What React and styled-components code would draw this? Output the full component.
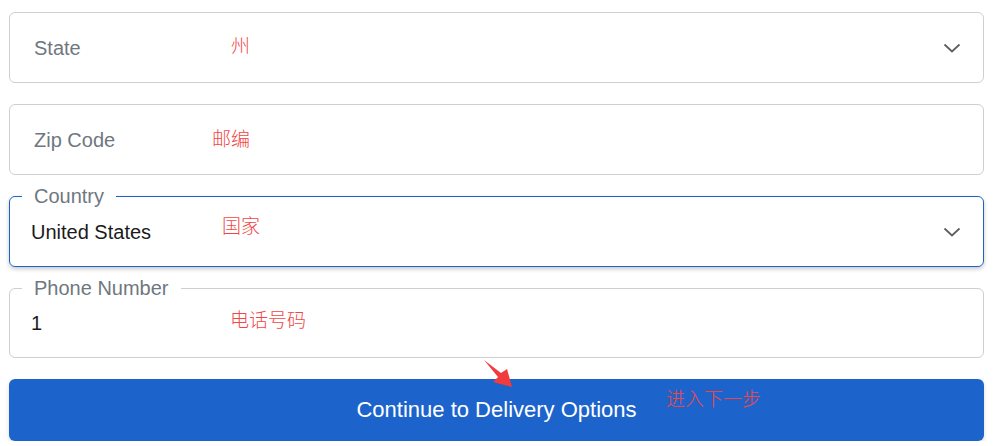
import styled, { createGlobalStyle } from "styled-components";

const Global = createGlobalStyle`
  body {
    margin: 0;
    background: #fff;
    font-family: "Liberation Sans", Arial, sans-serif;
  }
`;

const Form = styled.div`
  display: flex;
  flex-direction: column;
  gap: 21px;
  padding: 12px 12px 0 9px;
  position: relative;
`;

const Field = styled.div`
  position: relative;
  height: ${(p) => p.$h || 71}px;
  box-sizing: border-box;
  border: 1px solid ${(p) => (p.$focused ? "#1d62c8" : "#cfcfcf")};
  border-radius: 6px;
  box-shadow: ${(p) => (p.$focused ? "0 2px 4px rgba(0,0,0,0.22)" : "none")};
  display: flex;
  align-items: center;
  padding: 0 22px 0 ${(p) => (p.$filled ? 21 : 24)}px;
`;

const Placeholder = styled.span`
  font-size: 20px;
  color: #6f7780;
  flex: 1;
  padding-top: 2px;
`;

const Value = styled.span`
  font-size: 20px;
  color: #1b1b1b;
  flex: 1;
  padding-top: 1px;
`;

const Legend = styled.span`
  position: absolute;
  top: -12px;
  left: 12px;
  padding: 0 12px;
  background: #fff;
  font-size: 20px;
  line-height: 22px;
  color: #6f7780;
`;

const Note = styled.span`
  position: absolute;
  left: ${(p) => p.$x}px;
  top: ${(p) => p.$y}px;
  font-family: "Noto Sans CJK SC", sans-serif;
  font-size: 19px;
  line-height: 1;
  color: #f24646;
  font-weight: 300;
  white-space: nowrap;
`;

const Chevron = styled.svg`
  width: 18px;
  height: 10px;
  flex: none;
`;

const Button = styled.button`
  height: 62px;
  border: none;
  border-radius: 6px;
  background: #1c64cc;
  color: #fff;
  font-family: "Liberation Sans", Arial, sans-serif;
  font-size: 22px;
  box-shadow: 0 2px 4px rgba(0, 0, 0, 0.15);
  position: relative;
  padding: 0;
`;

const Arrow = styled.svg`
  position: absolute;
  left: 480px;
  top: 356px;
  width: 36px;
  height: 34px;
`;

function Down() {
  return (
    <Chevron viewBox="0 0 18 10">
      <polyline points="1.5,1.5 9,8.5 16.5,1.5" fill="none" stroke="#5f5f5f" strokeWidth="1.8" />
    </Chevron>
  );
}

export default function App() {
  return (
    <>
      <Global />
      <Form>
        <Field>
          <Placeholder>State</Placeholder>
          <Down />
          <Note $x={221} $y={22}>州</Note>
        </Field>
        <Field>
          <Placeholder>Zip Code</Placeholder>
          <Note $x={202} $y={23}>邮编</Note>
        </Field>
        <Field $focused $filled>
          <Legend>Country</Legend>
          <Value>United States</Value>
          <Down />
          <Note $x={212} $y={18}>国家</Note>
        </Field>
        <Field $filled $h={70}>
          <Legend>Phone Number</Legend>
          <Value>1</Value>
          <Note $x={220} $y={20}>电话号码</Note>
        </Field>
        <Button>
          Continue to Delivery Options
          <Note $x={657} $y={9}>进入下一步</Note>
        </Button>
        <Arrow viewBox="0 0 36 34">
          <polygon points="4,4 21,17 27,13 32,31 13,26 18,21" fill="#f03c3c" />
        </Arrow>
      </Form>
    </>
  );
}
